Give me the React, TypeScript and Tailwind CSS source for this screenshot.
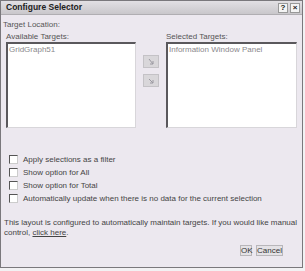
import React from 'react'

const font = { fontFamily: '"Liberation Sans", Arial, sans-serif' }

function Check({ label }: { label: string }) {
  return (
    <div className="flex h-[13px] items-center">
      <span className="ml-[6px] mr-[5px] h-[9px] w-[9px] border border-t-[#555] border-l-[#555] border-b-[#ccc] border-r-[#ccc] bg-white" />
      <span>{label}</span>
    </div>
  )
}

function ArrowBtn({ dir }: { dir: 'right' | 'left' }) {
  return (
    <div className="flex h-[13px] w-[16px] items-center justify-center border border-[#c4c2c6] bg-[#d9d7da]">
      <svg width="8" height="8" viewBox="0 0 8 8">
        {dir === 'right' ? (
          <path d="M2 1 L6 6 M6 6 L3 6 M6 6 L6 3" stroke="#9a98a0" strokeWidth="1" fill="none" />
        ) : (
          <path d="M2 2 L6 6 M6 6 L3 6 M6 6 L6 3" stroke="#9a98a0" strokeWidth="1" fill="none" />
        )}
      </svg>
    </div>
  )
}

export default function App() {
  return (
    <div className="h-[271px] w-[305px] bg-[#f2f1f3] text-[8px] leading-[11px] text-[#333]" style={font}>
      <div className="flex h-[268px] w-[303px] flex-col border border-[#7a787c] bg-[#ece8ef]">
        {/* title bar */}
        <div className="flex h-[14px] items-center justify-between border-b border-[#b0aeb2] bg-gradient-to-b from-[#e2e0e4] to-[#c9c7cb] pl-[5px] pr-[2px]">
          <span className="text-[8.5px] font-bold text-[#222]">Configure Selector</span>
          <div className="flex gap-[2px]">
            <span className="flex h-[10px] w-[10px] items-center justify-center border border-[#999] bg-[#f4f4f4] text-[8px] font-bold leading-none text-[#222]">?</span>
            <span className="flex h-[10px] w-[10px] items-center justify-center border border-[#999] bg-[#f4f4f4] text-[8px] font-bold leading-none text-[#222]">×</span>
          </div>
        </div>

        <div className="flex flex-1 flex-col px-[2px] pt-[4px] text-[#555]">
          <div>Target Location:</div>
          <div className="mt-[1px] flex pl-[3px]">
            <div className="flex w-[130px] flex-col">
              <div>Available Targets:</div>
              <div className="h-[86px] border border-t-[2px] border-l-[2px] border-t-[#5a585c] border-l-[#5a585c] border-b-[#d8d6da] border-r-[#d8d6da] bg-white px-[1px] text-[#8a888c]">
                GridGraph51
              </div>
            </div>
            <div className="flex w-[30px] flex-col items-center gap-[6px] pt-[24px]">
              <ArrowBtn dir="right" />
              <ArrowBtn dir="left" />
            </div>
            <div className="flex w-[131px] flex-col">
              <div>Selected Targets:</div>
              <div className="h-[86px] border border-t-[2px] border-l-[2px] border-t-[#5a585c] border-l-[#5a585c] border-b-[#d8d6da] border-r-[#d8d6da] bg-white px-[1px] text-[#8a888c]">
                Information Window Panel
              </div>
            </div>
          </div>

          <div className="mt-[25px] flex flex-col text-[#444]">
            <Check label="Apply selections as a filter" />
            <Check label="Show option for All" />
            <Check label="Show option for Total" />
            <Check label="Automatically update when there is no data for the current selection" />
          </div>

          <p className="mt-[13px] pl-[1px] leading-[10px] text-[#444]">
            This layout is configured to automatically maintain targets. If you would like manual control,{' '}
            <span className="underline">click here</span>.
          </p>

          <div className="mt-[7px] flex justify-end gap-[4px] pr-[17px]">
            <button className="h-[11px] w-[12px] border border-[#b8b6ba] bg-[#e4e2e6] text-[8px] leading-[9px] text-[#333]">OK</button>
            <button className="h-[11px] w-[27px] border border-[#b8b6ba] bg-[#e4e2e6] text-[8px] leading-[9px] text-[#333]">Cancel</button>
          </div>
        </div>
      </div>
    </div>
  )
}
